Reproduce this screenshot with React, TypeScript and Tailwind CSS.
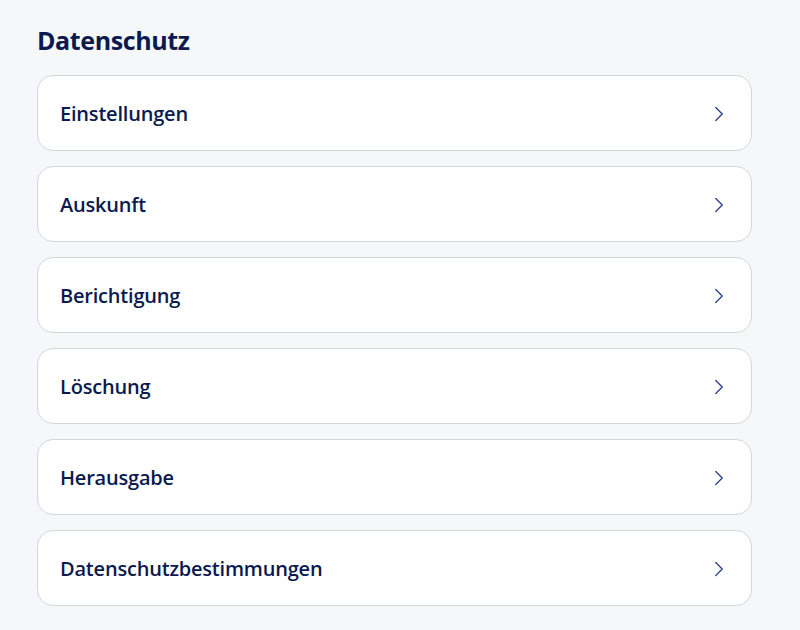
import { ChevronRight } from "lucide-react";

const items = [
  "Einstellungen",
  "Auskunft",
  "Berichtigung",
  "Löschung",
  "Herausgabe",
  "Datenschutzbestimmungen",
];

export default function App() {
  return (
    <div
      className="min-h-[630px] bg-[#f6f7f9] px-[37px] pt-[24px]"
      style={{ fontFamily: '"Open Sans", "Noto Sans", sans-serif' }}
    >
      <h2 className="text-[25px] font-bold leading-[32px] text-[#0b1a4e] tracking-[-0.4px]">
        Datenschutz
      </h2>
      <div className="mt-[19px] flex w-[715px] flex-col gap-[15px]">
        {items.map((label) => (
          <button
            key={label}
            className="flex h-[76px] items-center justify-between rounded-[16px] border border-[#d3d6dd] bg-white pl-[22px] pr-[19px] pt-[2px] text-left"
          >
            <span className="text-[20px] font-semibold text-[#0b1a4e] tracking-[-0.2px]">
              {label}
            </span>
            <ChevronRight className="h-[26px] w-[26px] text-[#34458a]" strokeWidth={1.3} />
          </button>
        ))}
      </div>
    </div>
  );
}
